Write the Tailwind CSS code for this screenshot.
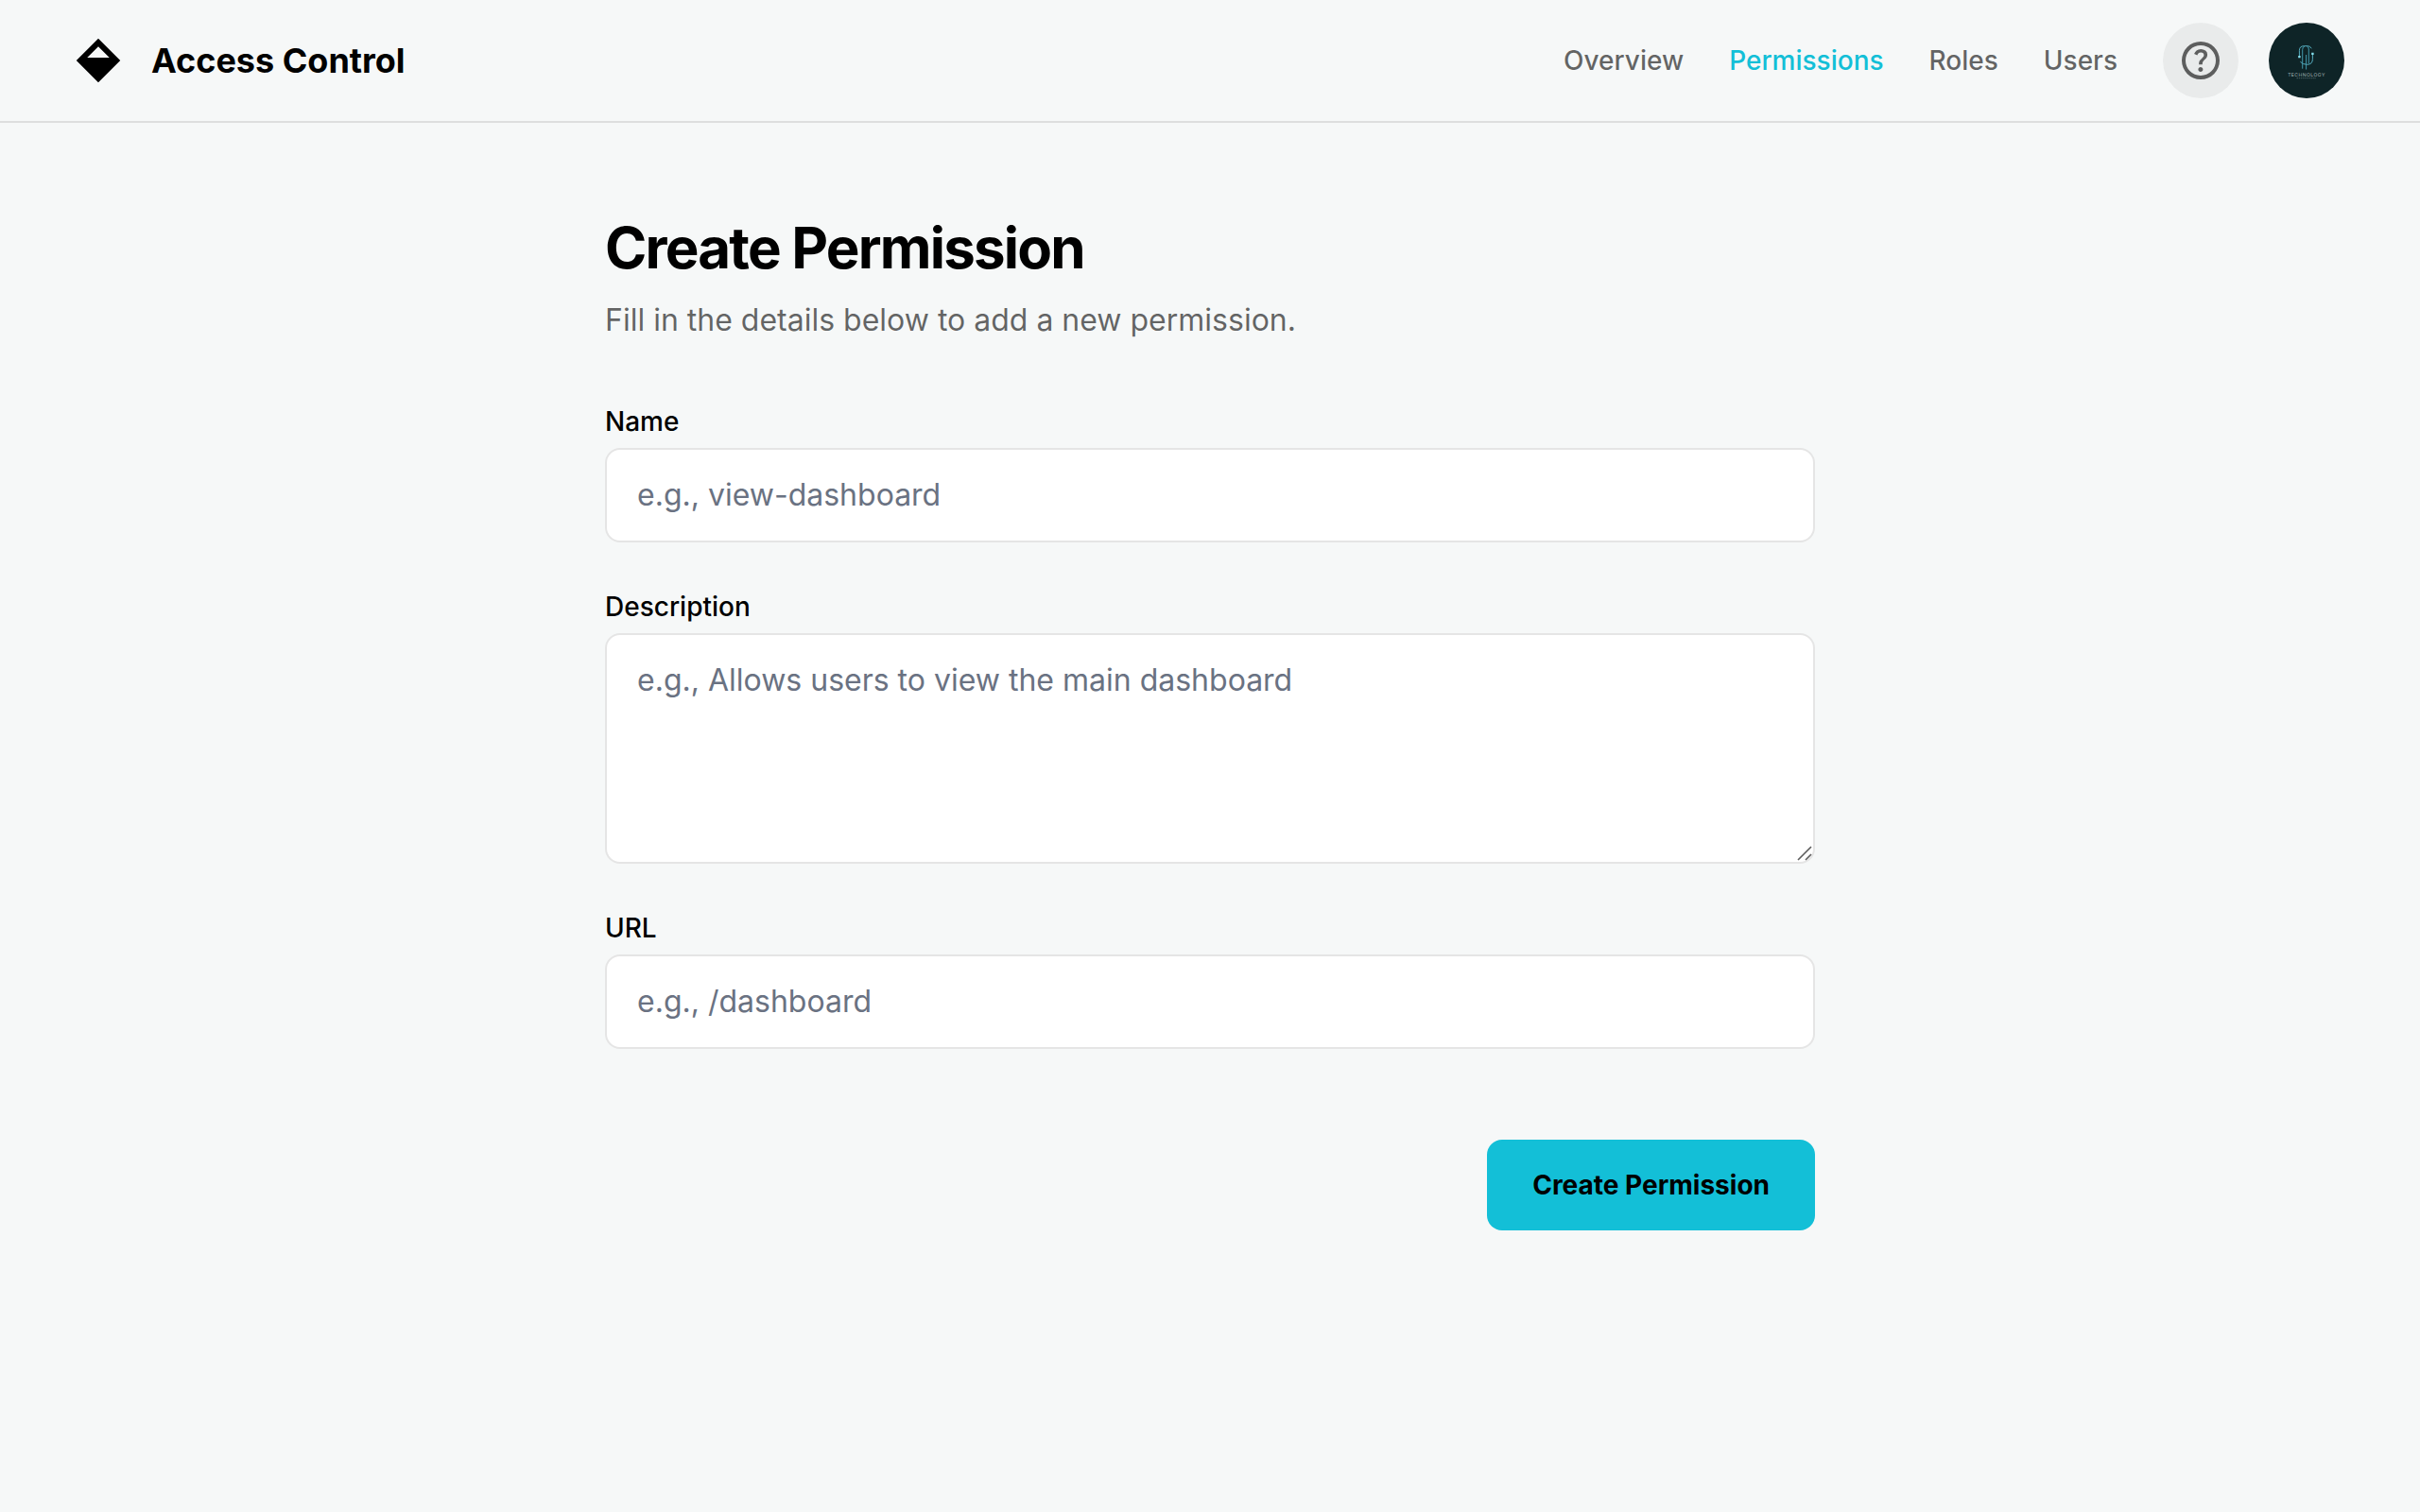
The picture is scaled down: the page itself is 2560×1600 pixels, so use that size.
<!DOCTYPE html>
<html lang="en">
<head>
<meta charset="utf-8">
<meta name="viewport" content="width=device-width, initial-scale=1">
<title>Create Permission - Access Control</title>
<script src="https://cdn.jsdelivr.net/npm/@tailwindcss/browser@4"></script>
</head>
<body class="flex min-h-screen flex-col bg-[#f6f8f8] font-['Inter',sans-serif] text-black antialiased">
<header class="flex items-center justify-between border-b-2 border-black/10 px-20 py-6">
  <div class="flex items-center gap-8">
    <svg class="size-12" viewBox="0 0 48 48" fill="currentColor" aria-hidden="true"><path fill-rule="evenodd" d="M24 .757 47.243 24 24 47.243.757 24 24 .757ZM24 9.243 12.243 21h23.514L24 9.243Z"/></svg>
    <h2 class="text-4xl leading-[42px] font-bold">Access Control</h2>
  </div>
  <div class="flex items-center gap-12">
    <nav class="flex items-center gap-12 text-[28px] leading-[42px] font-medium text-black/60">
      <a href="#">Overview</a>
      <a href="#" class="text-[#13bfd7]" aria-current="page">Permissions</a>
      <a href="#">Roles</a>
      <a href="#">Users</a>
    </nav>
    <div class="flex items-center gap-8">
      <button type="button" aria-label="Help" class="flex size-20 items-center justify-center rounded-full bg-black/5 text-black/60">
        <svg class="size-12" viewBox="0 -960 960 960" fill="currentColor" aria-hidden="true"><path d="M478-240q21 0 35.500-14.500T528-290q0-21-14.500-35.500T478-340q-21 0-35.500 14.500T428-290q0 21 14.500 35.500T478-240Zm-36-154h74q0-33 7.500-52t42.500-52q26-26 41-49.500t15-56.500q0-56-41-86t-97-30q-57 0-92.500 30T342-618l66 26q5-18 22.500-39t53.500-21q32 0 48 17.500t16 38.500q0 20-12 37.500T506-526q-44 39-54 59t-10 73Zm38 314q-83 0-156-31.500T197-197q-54-54-85.500-127T80-480q0-83 31.500-156T197-763q54-54 127-85.500T480-880q83 0 156 31.500T763-763q54 54 85.500 127T880-480q0 83-31.500 156T763-197q-54 54-127 85.500T480-80Zm0-80q134 0 227-93t93-227q0-134-93-227t-227-93q-134 0-227 93t-93 227q0 134 93 227t227 93Z"/></svg>
      </button>
      <svg class="size-20 rounded-full bg-[#0e2427] [text-rendering:geometricPrecision]" viewBox="0 0 80 80" fill="none" role="img" aria-label="Profile">
        <g stroke="#5fbccf" stroke-width=".9">
          <path d="M32.400 35v-5.500q0-4.800 5-4.800h4q2.500 0 3.800 2.600"/>
          <path d="M46.400 34v4.500q0 5.800-6 5.800-4.500 0-7-3"/>
          <path d="M35.700 48.700V28.500q0-3 2.300-3.500M42.300 43V28q0-2.500-2-3" stroke="#4aa6bb"/>
          <path d="M39.600 49.500V34" stroke="#4aa6bb"/>
        </g>
        <path fill="#86e0ee" d="M31.200 35h2.400v2.200h-2.400zM45.200 31.800h2.400V34h-2.400z"/>
        <text x="40" y="57" text-anchor="middle" fill="#a3b4b5" class="text-[5px] tracking-widest">TECHNOLOGY</text>
        <path stroke="#5b7274" stroke-width=".8" stroke-dasharray="1.500 .7" d="M29.500 58.700h20.500"/>
      </svg>
    </div>
  </div>
</header>

<main class="mx-auto w-full max-w-[1344px] flex-1 px-8 py-24">
  <h1 class="text-6xl leading-[72px] font-bold tracking-[-0.03em]">Create Permission</h1>
  <p class="mt-4 text-[32px] leading-[50px] text-black/60">Fill in the details below to add a new permission.</p>

  <form class="mt-[62px] flex flex-col gap-12">
    <div class="flex flex-col gap-2">
      <label for="name" class="text-[28px] leading-10 font-medium">Name</label>
      <input id="name" type="text" placeholder="e.g., view-dashboard" class="w-full rounded-2xl border-2 border-black/10 bg-white px-8 py-6 text-[32px] leading-[48px] placeholder:text-gray-500">
    </div>
    <div class="flex flex-col gap-2">
      <label for="description" class="text-[28px] leading-10 font-medium">Description</label>
      <div class="relative flex">
        <textarea id="description" rows="4" placeholder="e.g., Allows users to view the main dashboard" class="w-full resize-none rounded-2xl border-2 border-black/10 bg-white px-8 py-6 text-[32px] leading-[48px] placeholder:text-gray-500"></textarea>
        <svg class="pointer-events-none absolute right-0.5 bottom-0.5 size-5" viewBox="0 0 20 20" stroke="#5c5c5c" stroke-width="1.600" aria-hidden="true"><path d="M4 18 18 4M12 18l6-6"/></svg>
      </div>
    </div>
    <div class="flex flex-col gap-2">
      <label for="url" class="text-[28px] leading-10 font-medium">URL</label>
      <input id="url" type="text" placeholder="e.g., /dashboard" class="w-full rounded-2xl border-2 border-black/10 bg-white px-8 py-6 text-[32px] leading-[48px] placeholder:text-gray-500">
    </div>
    <div class="flex justify-end pt-12">
      <button type="submit" class="rounded-2xl bg-[#13bfd7] px-12 py-7 text-[28px] leading-10 font-bold">Create Permission</button>
    </div>
  </form>
</main>
</body>
</html>
